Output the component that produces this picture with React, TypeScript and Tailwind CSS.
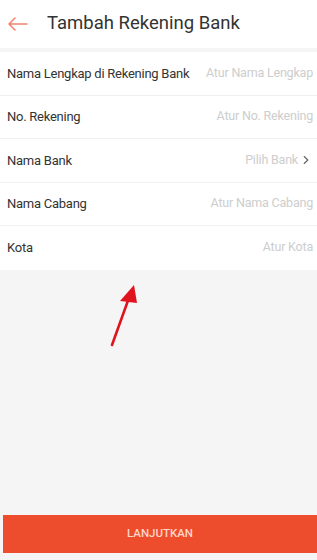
import { ChevronRight } from 'lucide-react';

const FIELDS = [
  { label: 'Nama Lengkap di Rekening Bank', hint: 'Atur Nama Lengkap' },
  { label: 'No. Rekening', hint: 'Atur No. Rekening' },
  { label: 'Nama Bank', hint: 'Pilih Bank', chevron: true },
  { label: 'Nama Cabang', hint: 'Atur Nama Cabang' },
  { label: 'Kota', hint: 'Atur Kota' },
];

export default function App() {
  return (
    <div className="flex h-[560px] w-[317px] flex-col bg-[#f5f5f5] font-['Roboto',sans-serif]">
      <header className="flex h-[48px] items-center bg-white">
        <svg width="22" height="14" viewBox="0 0 22 14" className="ml-[7px]" fill="none" stroke="#f0826c" strokeWidth="1.5" strokeLinecap="round" strokeLinejoin="round">
          <path d="M20 7H2M8 1L2 7l6 6" />
        </svg>
        <h1 className="ml-[18px] text-[18.5px] text-[#333]">Tambah Rekening Bank</h1>
      </header>

      <div className="mt-[4px] flex flex-col bg-white">
        {FIELDS.map((f, i) => (
          <div
            key={f.label}
            className={`flex h-[43.5px] items-center justify-between pl-[7px] pr-[4px] ${i < FIELDS.length - 1 ? 'border-b border-[#f0f0f0]' : ''}`}
          >
            <span className="whitespace-nowrap text-[13px] tracking-[-0.25px] text-[#333]">{f.label}</span>
            <span className="flex items-center whitespace-nowrap text-[12.5px] tracking-[-0.2px] text-[#cdcdcd]">
              {f.hint}
              {f.chevron && <ChevronRight className="ml-[1px] h-[14px] w-[14px] text-[#666]" strokeWidth={2} />}
            </span>
          </div>
        ))}
      </div>

      <div className="relative flex-1">
        <svg className="absolute left-[104px] top-[13px]" width="40" height="66" viewBox="0 0 40 66">
          <path d="M8 62L26 12" stroke="#e0141e" strokeWidth="2.6" strokeLinecap="round" />
          <path d="M30 2L16 18L33 20Z" fill="#e0141e" />
        </svg>
      </div>

      <button className="mb-[7px] ml-[3px] h-[38px] bg-[#ee4d2d] text-[11.5px] font-medium text-[#ffd5c8]">
        LANJUTKAN
      </button>
    </div>
  );
}
